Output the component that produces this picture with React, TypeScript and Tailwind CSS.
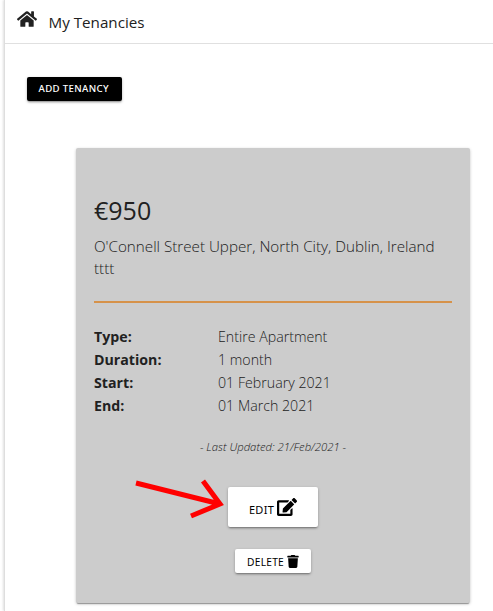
import React from "react";
import { FaEdit, FaHome, FaTrash } from "react-icons/fa";

const details = [
  { label: "Type:", value: "Entire Apartment" },
  { label: "Duration:", value: "1 month" },
  { label: "Start:", value: "01 February 2021" },
  { label: "End:", value: "01 March 2021" },
];

const raised =
  "shadow-[0_2px_2px_-1px_rgba(0,0,0,0.3),0_1px_3px_rgba(0,0,0,0.25)]";

export default function App() {
  return (
    <div className="h-[611px] w-[493px] overflow-hidden bg-white pl-1 font-['Open_Sans',sans-serif] text-[#212121]">
      <main className="h-full border-l border-[#dedede] shadow-[-1px_0_2px_rgba(0,0,0,0.12)]">
        <header className="flex h-11 items-start border-b border-[#e0e0e0] pl-3">
          <FaHome className="mt-[9.5px] h-[18px] w-5" />
          <h1 className="ml-[11.5px] mt-[11px] text-[15.2px] leading-[22px]">My Tenancies</h1>
        </header>

        <button
          className={`ml-[22px] mt-[33px] flex h-6 w-[94.5px] items-center justify-center rounded-[2px] bg-black pr-px font-['Noto_Sans',sans-serif] text-[9.6px] font-medium tracking-[0.35px] text-white ${raised}`}
        >
          <span className="mt-px">ADD TENANCY</span>
        </button>

        <section className="ml-[71px] mt-[47px] h-[454.5px] w-[394px] rounded-[2px] bg-[#ccc] px-[18px] pt-[43px] shadow-[0_2px_1px_-1px_rgba(0,0,0,0.3),0_1px_3px_rgba(0,0,0,0.25)]">
          <h2 className="text-[25px] leading-[38px]">€950</h2>
          <p className="mt-[6px] text-[15.2px] font-light leading-[22px]">
            O'Connell Street Upper, North City, Dublin, Ireland
            <br />
            tttt
          </p>
          <hr className="mt-[22px] border-t-2 border-[#d6924a]" />
          <dl className="mt-[21.8px] grid grid-cols-[124px_1fr] text-[14.2px] leading-[23.1px]">
            {details.map(({ label, value }) => (
              <React.Fragment key={label}>
                <dt className="font-bold">{label}</dt>
                <dd className="font-light">{value}</dd>
              </React.Fragment>
            ))}
          </dl>
          <p className="mt-[20.5px] text-center text-[11.3px] font-light italic leading-[18px]">
            - Last Updated: 21/Feb/2021 -
          </p>

          <div className="relative mt-[31.2px] flex flex-col items-center">
            <button
              className={`flex h-[40.6px] w-[90px] items-center justify-center gap-[3px] rounded-[2px] bg-white font-['Noto_Sans',sans-serif] text-[11px] tracking-[0.3px] text-black ${raised}`}
            >
              <span className="mt-[6px]">EDIT</span>
              <FaEdit className="h-[18px] w-5" />
            </button>
            <button
              className={`mt-[21.6px] flex h-[24.4px] w-[75.5px] items-center justify-center gap-[3px] rounded-[2px] bg-white font-['Noto_Sans',sans-serif] text-[10.2px] tracking-[0.25px] text-black ${raised}`}
            >
              <span className="mt-[2px]">DELETE</span>
              <FaTrash className="h-[13px] w-3" />
            </button>
            <svg
              className="absolute -top-[10px] left-[40px] h-[44px] w-[92px]"
              viewBox="0 0 92 44"
              fill="none"
              stroke="#f00"
              strokeWidth="5"
            >
              <path d="M2 6L86 27M69 4L86 27L57 39" strokeLinejoin="miter" />
            </svg>
          </div>
        </section>
      </main>
    </div>
  );
}
